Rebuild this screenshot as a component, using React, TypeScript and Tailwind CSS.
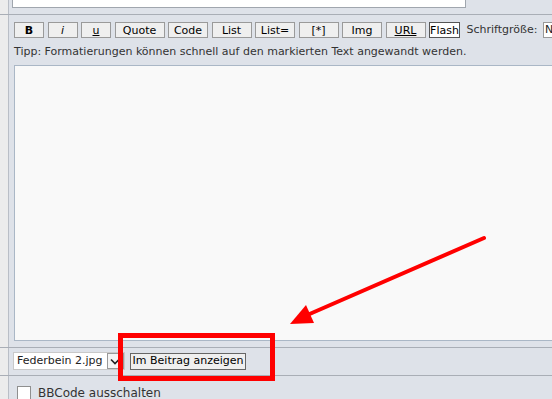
import React from "react"

// Forum-Editor: Toolbar, Textfeld, Anhang-Zeile mit rotem Hinweis

const font = { fontFamily: '"DejaVu Sans", Verdana, sans-serif' }

function Btn({ w, children, className = "" }: { w: string; children: React.ReactNode; className?: string }) {
  return (
    <div
      className={`${w} h-[16px] flex items-center justify-center border border-[#9a9a9a] bg-[#efefef] text-[11px] leading-none text-black shrink-0 ${className}`}
    >
      {children}
    </div>
  )
}

function Row({ children, className = "" }: { children: React.ReactNode; className?: string }) {
  return (
    <div className={`flex border-b border-[#a9aeb6] ${className}`}>
      <div className="w-[9px] shrink-0 bg-[#ececec] border-r border-[#b9bec6]" />
      <div className="flex-1 min-w-0 bg-[#dee2e9]">{children}</div>
    </div>
  )
}

export default function App() {
  return (
    <div className="relative w-[552px] h-[399px] overflow-hidden bg-[#dee2e9] text-[#222]" style={font}>
      {/* Titelzeile (abgeschnitten) */}
      <Row className="h-[15px]">
        <div className="ml-[3px] w-[454px] h-[8px] bg-white border-x border-b border-[#a0a6ae]" />
      </Row>

      {/* Toolbar + Textfeld */}
      <Row className="h-[333px]">
        <div className="flex items-center gap-[3.5px] pl-[5px] pt-[7px] whitespace-nowrap">
          <Btn w="w-[30px]" className="font-bold">B</Btn>
          <Btn w="w-[30px]" className="italic">i</Btn>
          <Btn w="w-[30px]" className="underline">u</Btn>
          <Btn w="w-[50px]">Quote</Btn>
          <Btn w="w-[40px]">Code</Btn>
          <Btn w="w-[40px]">List</Btn>
          <Btn w="w-[40px]">List=</Btn>
          <Btn w="w-[40px]">[*]</Btn>
          <Btn w="w-[40px]">Img</Btn>
          <Btn w="w-[40px]" className="underline">URL</Btn>
          <Btn w="w-[31px]" className="bg-white border-[#555]">Flash</Btn>
          <span className="ml-[3px] text-[11px] text-[#333]">Schriftgröße:</span>
          <div className="ml-[2px] h-[16px] w-[40px] bg-white border border-[#999] text-[11px] leading-[14px] pl-[1px] shrink-0">
            Normal
          </div>
        </div>
        <div className="pl-[5px] pt-[6px] text-[11px] leading-[14px] text-[#333] whitespace-nowrap">
          Tipp: Formatierungen können schnell auf den markierten Text angewandt werden.
        </div>
        <div className="ml-[5px] mt-[6px] h-[276px] w-[600px] bg-[#f9f9f9] border border-[#aab7c6]" />
      </Row>

      {/* Anhang */}
      <Row className="h-[28px]">
        <div className="flex items-center pl-[4px] pt-[4px] gap-[5px]">
          <div className="flex items-center h-[18px] bg-white border border-[#c9c9c9] text-[11px] pl-[3px]">
            <span className="pr-[4px]">Federbein 2.jpg</span>
            <div className="w-[17px] h-[16px] border border-[#999] bg-[#f4f4f4] flex items-center justify-center">
              <svg width="10" height="7" viewBox="0 0 10 7">
                <path d="M1 1.5 L5 5.5 L9 1.5" fill="none" stroke="#222" strokeWidth="1.6" />
              </svg>
            </div>
          </div>
          <div className="h-[17px] px-[2px] flex items-center border border-[#666] bg-[#efefef] text-[11px] text-black">
            Im Beitrag anzeigen
          </div>
        </div>
      </Row>

      {/* Optionen */}
      <Row className="h-[24px] border-b-0">
        <div className="flex items-center pl-[8px] pt-[8px] gap-[7px]">
          <div className="w-[14px] h-[14px] bg-white border border-[#8f8f8f]" />
          <span className="text-[12px] text-[#333]">BBCode ausschalten</span>
        </div>
      </Row>

      {/* Markierung */}
      <div className="absolute left-[118px] top-[333px] w-[157px] h-[48px] border-[5px] border-[#f00]" />
      <svg className="absolute left-0 top-0" width="552" height="399">
        <line x1="484" y1="238" x2="305" y2="316" stroke="#f00" strokeWidth="4" strokeLinecap="round" />
        <polygon points="290,324 306,305 314,323" fill="#f00" />
      </svg>
    </div>
  )
}
